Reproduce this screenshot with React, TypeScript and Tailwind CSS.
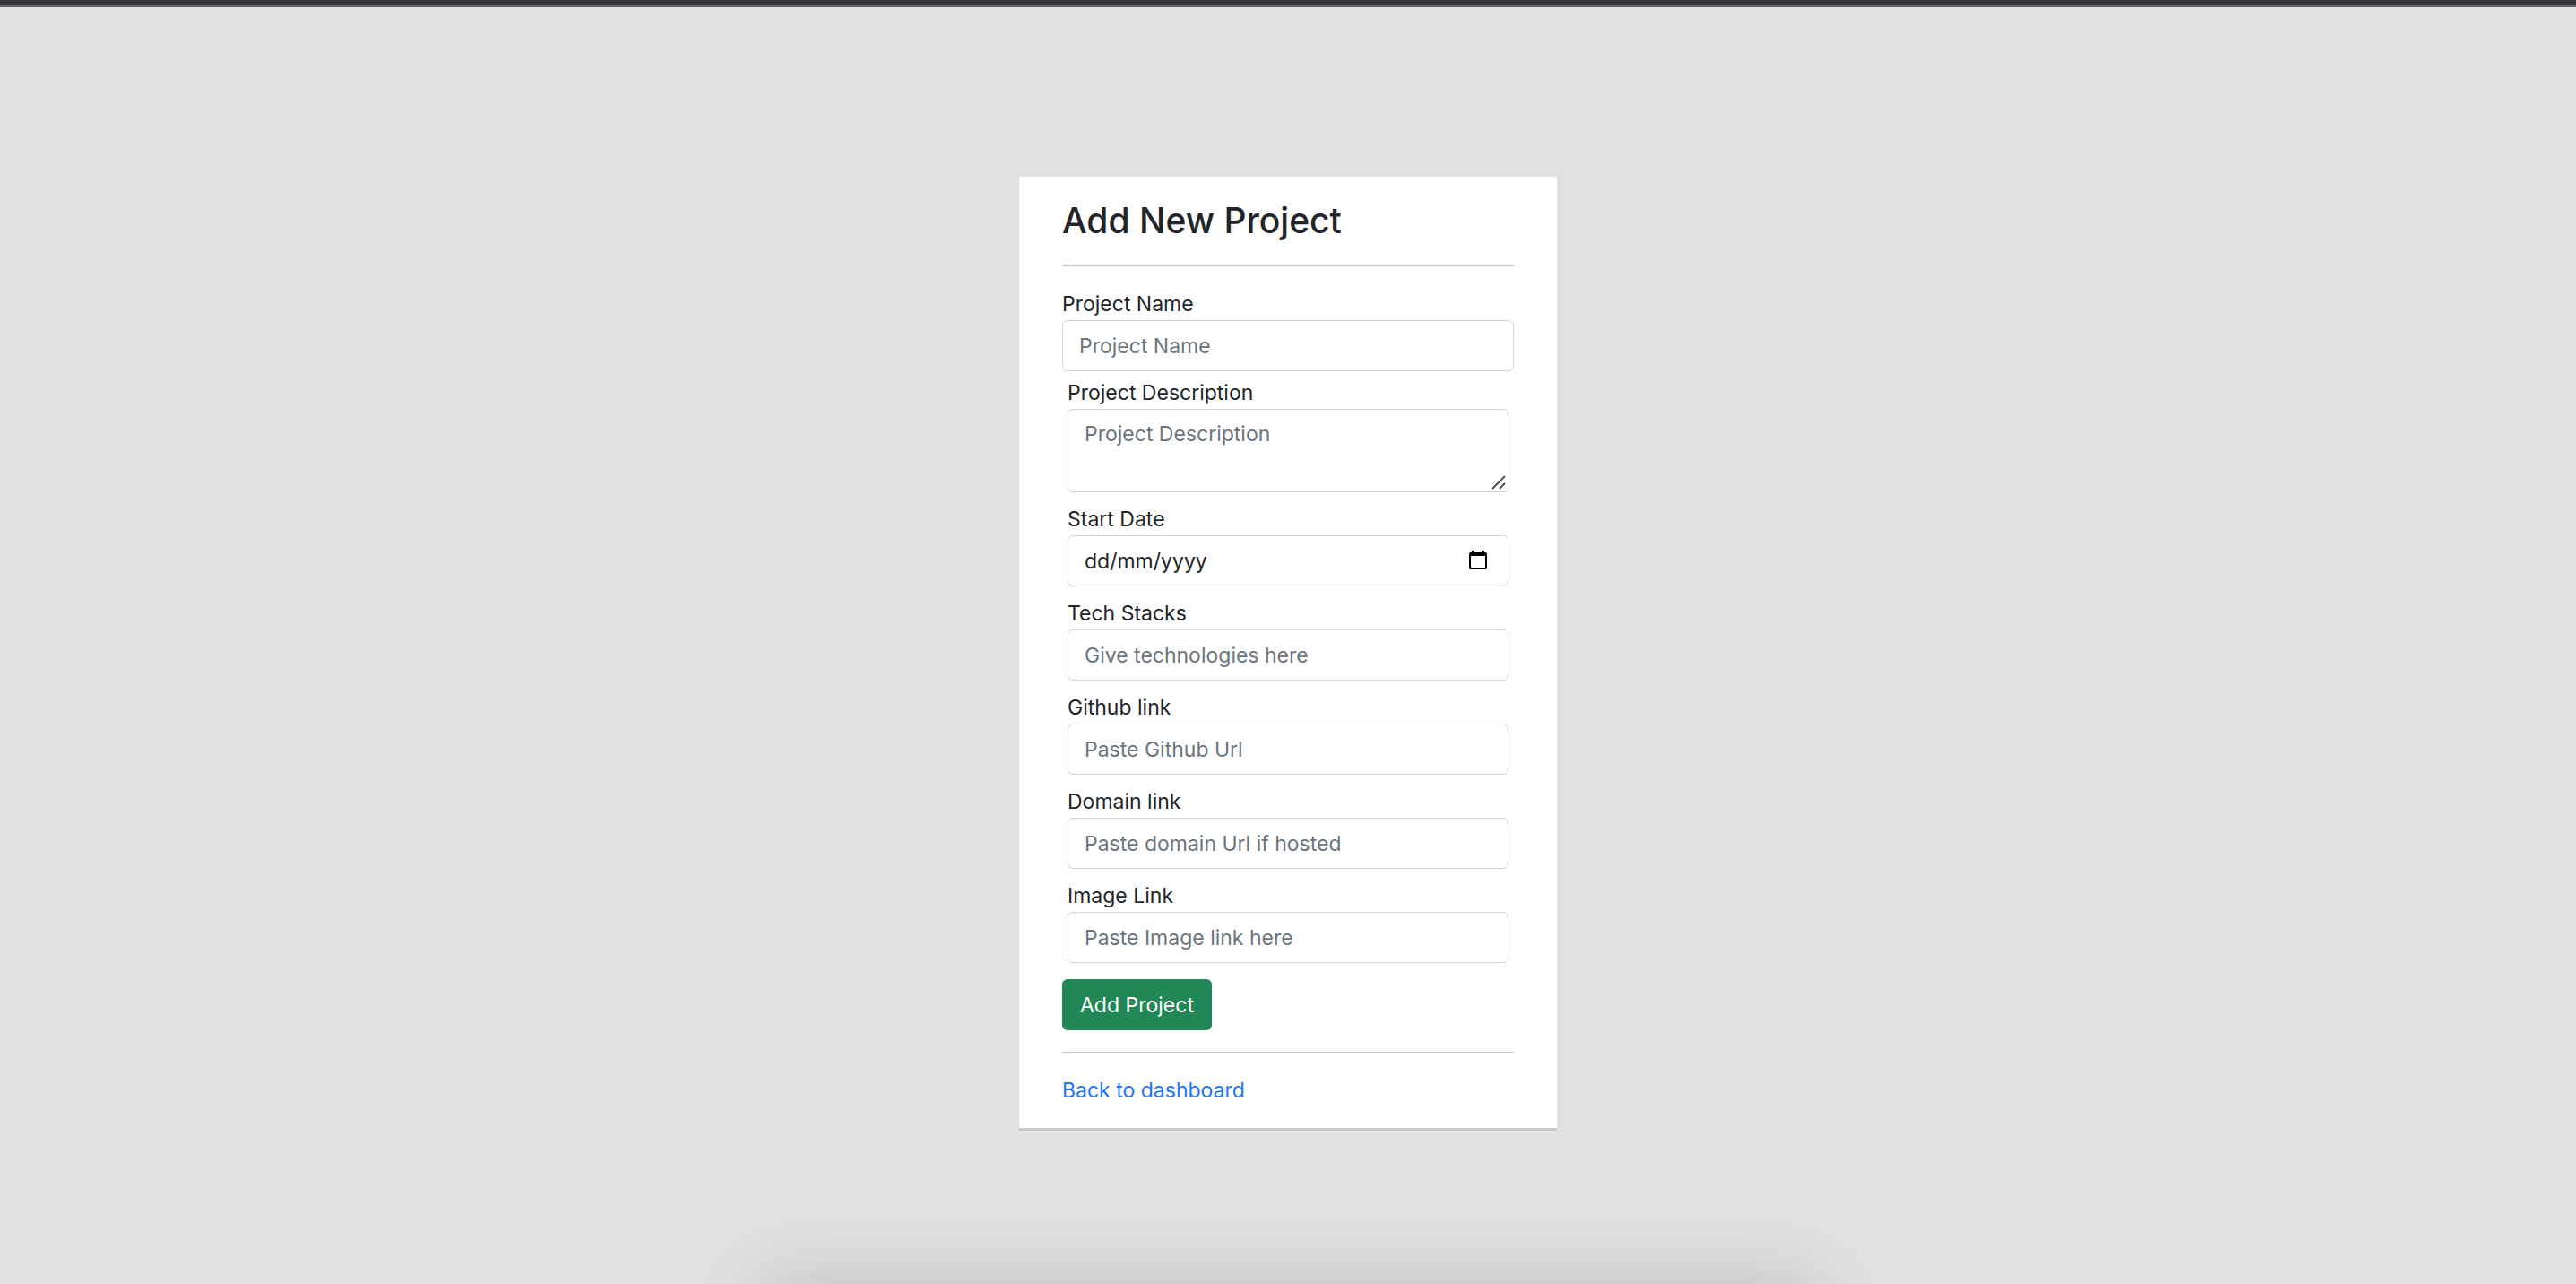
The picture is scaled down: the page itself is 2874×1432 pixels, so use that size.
import { useState, type ReactNode } from "react";

const controlClass =
  "block w-full rounded-md border border-[#ced4da] bg-white px-[18px] text-[23px] leading-9 text-[#212529] placeholder:text-[#6c757d] placeholder:opacity-100 focus:outline-2 focus:outline-[#86b7fe]";

function Field({ id, label, children }: { id: string; label: string; children: ReactNode }) {
  return (
    <div>
      <label htmlFor={id} className="block leading-9">
        {label}
      </label>
      {children}
    </div>
  );
}

function TextField({ id, label, placeholder }: { id: string; label: string; placeholder: string }) {
  return (
    <Field id={id} label={label}>
      <input id={id} name={id} type="text" placeholder={placeholder} className={`${controlClass} h-[57px]`} />
    </Field>
  );
}

function DescriptionField() {
  return (
    <Field id="description" label="Project Description">
      <div className="relative">
        <textarea
          id="description"
          name="description"
          placeholder="Project Description"
          className={`${controlClass} h-[93px] resize-none py-[9px]`}
        />
        <svg
          aria-hidden="true"
          viewBox="0 0 16 16"
          className="pointer-events-none absolute right-[3px] bottom-[3px] size-4"
          fill="none"
          stroke="#505050"
          strokeWidth="1.8"
        >
          <path d="M1 15 15 1M9 15l6-6" />
        </svg>
      </div>
    </Field>
  );
}

function DateField() {
  const [value, setValue] = useState("");
  return (
    <Field id="start-date" label="Start Date">
      <div className="relative">
        <input
          id="start-date"
          name="start-date"
          type="date"
          lang="en-GB"
          value={value}
          onChange={(e) => setValue(e.target.value)}
          className={`${controlClass} h-[57px] [&::-webkit-calendar-picker-indicator]:opacity-0 ${
            value ? "" : "[&::-webkit-datetime-edit]:opacity-0"
          }`}
        />
        {!value && (
          <span aria-hidden="true" className="pointer-events-none absolute inset-y-0 left-[19px] flex items-center">
            dd/mm/yyyy
          </span>
        )}
        <svg
          aria-hidden="true"
          viewBox="0 0 20 22"
          className="pointer-events-none absolute top-[17px] right-[24px] h-[22px] w-5"
        >
          <path
            fillRule="evenodd"
            d="M3 0h2v2h10V0h2v2h1a2 2 0 0 1 2 2v15.500a1.500 1.500 0 0 1-1.500 1.500h-17A1.500 1.500 0 0 1 0 19.500V4a2 2 0 0 1 2-2h1zM2 6V19h16V6z"
          />
        </svg>
      </div>
    </Field>
  );
}

export default function App() {
  return (
    <div className="relative flex min-h-screen flex-col overflow-hidden bg-[#e1e1e1] font-['Inter','Liberation_Sans',sans-serif] text-[23px] leading-9 text-[#212529]">
      <header className="h-2 border-b-2 border-[#69656a] bg-[#35363a]" />
      <main className="flex grow flex-col items-center px-4 pt-[189px] pb-16">
        <section className="w-full max-w-[600px] bg-white px-12 py-6 shadow-[0_3px_0_#c8c8c8]">
          <h1 className="text-[39px] leading-[50px] font-medium">Add New Project</h1>
          <hr className="my-6 border-t-2 border-[#c8c8c8]" />
          <form onSubmit={(e) => e.preventDefault()}>
            <TextField id="name" label="Project Name" placeholder="Project Name" />
            <div className="mt-1.5 mb-[18px] flex flex-col gap-3 px-1.5">
              <DescriptionField />
              <DateField />
              <TextField id="tech-stacks" label="Tech Stacks" placeholder="Give technologies here" />
              <TextField id="github-link" label="Github link" placeholder="Paste Github Url" />
              <TextField id="domain-link" label="Domain link" placeholder="Paste domain Url if hosted" />
              <TextField id="image-link" label="Image Link" placeholder="Paste Image link here" />
            </div>
            <button type="submit" className="block h-[57px] rounded-md bg-[#218757] px-5 text-white">
              Add Project
            </button>
          </form>
          <hr className="my-6 border-[#c8c8c8]" />
          <a href="#dashboard" className="block w-fit text-[#1f75fb]">
            Back to dashboard
          </a>
        </section>
      </main>
      <div
        aria-hidden="true"
        className="pointer-events-none absolute inset-x-0 top-full mx-auto h-40 max-w-[1180px] shadow-[0_0_80px_rgba(0,0,0,0.16)]"
      />
    </div>
  );
}
